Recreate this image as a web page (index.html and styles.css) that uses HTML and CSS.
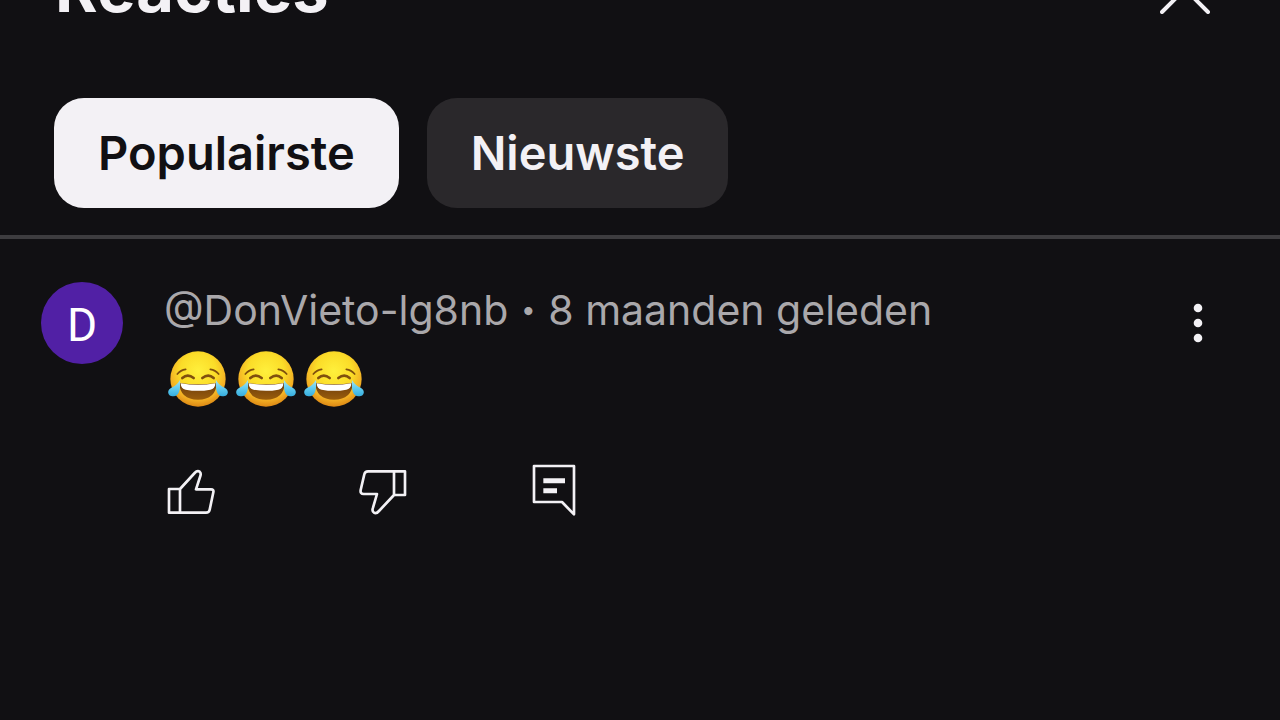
FILE: index.html
```html
<!DOCTYPE html>
<html lang="nl">
<head>
<meta charset="utf-8">
<meta name="viewport" content="width=device-width, initial-scale=1">
<title>Reacties</title>
<link rel="stylesheet" href="styles.css">
</head>
<body>
<svg class="defs" aria-hidden="true">
  <defs>
    <radialGradient id="face" cx="50%" cy="36%" r="66%">
      <stop offset="0" stop-color="#fff03c"/>
      <stop offset=".5" stop-color="#fbdc28"/>
      <stop offset=".78" stop-color="#f3b024"/>
      <stop offset="1" stop-color="#d98212"/>
    </radialGradient>
    <linearGradient id="mouth" x1="0" y1="0" x2="0" y2="1">
      <stop offset="0" stop-color="#6b3b0c"/>
      <stop offset="1" stop-color="#9a5d0c"/>
    </linearGradient>
    <linearGradient id="tear" x1="0" y1="0" x2="0" y2="1">
      <stop offset="0" stop-color="#a5e3f2"/>
      <stop offset=".5" stop-color="#62cdf0"/>
      <stop offset="1" stop-color="#35acdd"/>
    </linearGradient>
    <symbol id="joy" viewBox="0 0 180 180">
      <circle cx="90" cy="87" r="83" fill="url(#face)"/>
      <g fill="none" stroke="#80500e" stroke-linecap="round">
        <path d="M28 72Q38 60 53 58M152 72Q142 60 127 58" stroke-width="5"/>
        <path d="M43 84Q59 70 77 84M103 84Q121 70 137 84" stroke-width="8"/>
      </g>
      <path d="M34 99Q90 107 146 99Q144 149 90 149Q36 149 34 99Z" fill="url(#mouth)"/>
      <path d="M38 100Q90 109 142 100Q141 118 127 119Q90 126 53 119Q39 118 38 100Z" fill="#fff"/>
      <path d="M36 90C38 118 34 139 17 139C-3 139-4 120 10 113Q26 107 36 90Z" fill="url(#tear)"/>
      <path d="M144 90C142 118 146 139 163 139C183 139 184 120 170 113Q154 107 144 90Z" fill="url(#tear)"/>
    </symbol>
  </defs>
</svg>

<main class="panel">
  <header class="panel-header">
    <h1 class="title">Reacties</h1>
    <button class="icon-button close" aria-label="Sluiten">
      <svg class="close-icon" viewBox="0 0 50 50"><path d="M2 2L48 48M48 2L2 48"/></svg>
    </button>
  </header>

  <nav class="filters" aria-label="Sorteren">
    <button class="chip chip-active" aria-pressed="true">Populairste</button>
    <button class="chip" aria-pressed="false">Nieuwste</button>
  </nav>

  <article class="comment">
    <div class="avatar">D</div>
    <div class="content">
      <div class="meta"><span>@DonVieto-lg8nb</span><span class="dot">•</span><span>8 maanden geleden</span></div>
      <div class="message" role="img" aria-label="Drie keer tranen van het lachen">
        <svg class="emoji"><use href="#joy"/></svg>
        <svg class="emoji"><use href="#joy"/></svg>
        <svg class="emoji"><use href="#joy"/></svg>
      </div>
      <div class="actions">
        <button class="icon-button" aria-label="Leuk">
          <svg class="action-icon" viewBox="36 27 144 156"><path d="M42 102H75V173H42ZM75 102L119 54Q127 45 134 50Q139 54 136 63L123 103H168Q177 103 175 112L164 164Q162 173 153 173H75"/></svg>
        </button>
        <button class="icon-button" aria-label="Niet leuk">
          <svg class="action-icon" viewBox="27 27 144 156"><path d="M132 49H165V120H132ZM132 49H54Q45 49 43 58L32 105Q30 117 41 117H81L69 158Q65 169 72 173Q79 177 87 168L132 120"/></svg>
        </button>
        <button class="icon-button reply" aria-label="Reageren">
          <svg class="action-icon" viewBox="30 27 144 156"><path d="M39 33H159V178L123 141H39Z"/><path class="lines" d="M67 77H132M67 107H108"/></svg>
        </button>
      </div>
    </div>
    <button class="icon-button more" aria-label="Meer opties">
      <svg class="more-icon" viewBox="0 0 10 40"><circle cx="5" cy="5" r="4.3"/><circle cx="5" cy="20" r="4.3"/><circle cx="5" cy="35" r="4.3"/></svg>
    </button>
  </article>
</main>
</body>
</html>
```
FILE: styles.css
```css
* { box-sizing: border-box; }

body {
  margin: 0;
  min-height: 100vh;
  overflow: hidden;
  background: #111013;
  color: #f3f1f5;
  font-family: Inter, "Liberation Sans", sans-serif;
}

.defs { position: absolute; width: 0; height: 0; }

.icon-button {
  display: flex;
  padding: 0;
  border: 0;
  background: none;
  color: inherit;
}

.panel-header {
  display: flex;
  align-items: center;
  justify-content: space-between;
  height: 80px;
  margin-top: -51px;
  padding: 0 70px 0 55px;
}

.title {
  margin: 0;
  font-size: 65px;
  line-height: 80px;
  font-weight: 700;
}

.close-icon {
  width: 50px;
  height: 50px;
  fill: none;
  stroke: currentColor;
  stroke-width: 4;
  stroke-linecap: round;
}

.filters {
  display: flex;
  gap: 28px;
  padding: 69px 54px 27px;
  border-bottom: 4px solid #3d3c3f;
}

.chip {
  height: 110px;
  padding: 0 44px;
  border: 0;
  border-radius: 30px;
  background: #2a282b;
  color: #f3f1f5;
  font: 600 47px/56px Inter, "Liberation Sans", sans-serif;
}

.chip-active {
  background: #f3f1f5;
  color: #111013;
}

.comment {
  display: flex;
  align-items: flex-start;
  padding: 43px 77px 40px 41px;
}

.avatar {
  display: flex;
  align-items: center;
  justify-content: center;
  flex: none;
  width: 82px;
  height: 82px;
  margin-right: 41px;
  padding-top: 4px;
  border-radius: 50%;
  background: #5120a5;
  color: #fff;
  font: 400 46px/54px Roboto, sans-serif;
}

.content { flex: 1; min-width: 0; }

.meta {
  display: flex;
  align-items: center;
  color: #aaa8ab;
  font-size: 41px;
  line-height: 56px;
  white-space: nowrap;
}

.dot {
  width: 40px;
  font-size: 26px;
  text-align: center;
}

.message {
  display: flex;
  gap: 8px;
  padding: 12px 0 0 4px;
}

.emoji { width: 60px; height: 60px; }

.actions {
  display: flex;
  align-items: flex-start;
  gap: 144px;
  margin-top: 54px;
  padding-left: 3px;
}

.reply { margin-left: -20px; }

.action-icon {
  width: 48px;
  height: 52px;
  overflow: visible;
  fill: none;
  stroke: currentColor;
  stroke-width: 8;
  stroke-linejoin: round;
}

.lines { stroke-width: 15; }

.more { margin-top: 21px; }

.more-icon {
  width: 10px;
  height: 40px;
  fill: currentColor;
}
```
